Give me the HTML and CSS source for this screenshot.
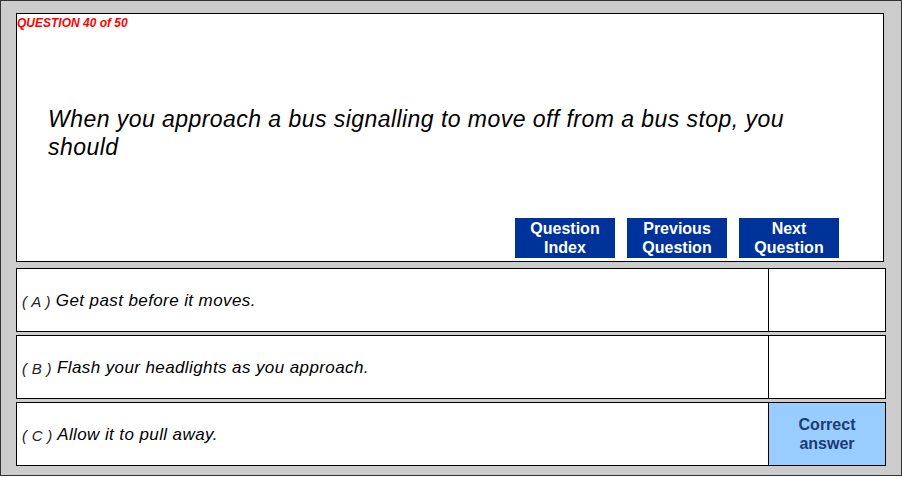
FILE: index.html
```html
<!DOCTYPE html>
<html lang="en">
<head>
  <meta charset="UTF-8" />
  <title>Question 40 of 50</title>
  <link rel="stylesheet" href="styles.css">
</head>
<body>
  <div class="frame">
    <div class="question-box">
      <div class="counter">QUESTION 40 of 50</div>
      <div class="question-text">When you approach a bus signalling to move off from a bus stop, you should</div>
      <div class="nav">
        <button class="nav-btn">Question<br>Index</button>
        <button class="nav-btn">Previous<br>Question</button>
        <button class="nav-btn">Next<br>Question</button>
      </div>
    </div>

    <div class="answers">
      <div class="answer">
        <div class="answer-text"><span class="letter">( A )</span> Get past before it moves.</div>
        <div class="answer-mark"></div>
      </div>
      <div class="answer">
        <div class="answer-text"><span class="letter">( B )</span> Flash your headlights as you approach.</div>
        <div class="answer-mark"></div>
      </div>
      <div class="answer">
        <div class="answer-text"><span class="letter">( C )</span> Allow it to pull away.</div>
        <div class="answer-mark correct">Correct<br>answer</div>
      </div>
    </div>
  </div>
</body>
</html>
```

FILE: styles.css
```css
* {
  box-sizing: border-box;
}
body {
  margin: 0;
  font-family: 'Liberation Sans', Arial, sans-serif;
  background: #fff;
}

.frame {
  width: 902px;
  height: 476px;
  background: #cccccc;
  border: 1px solid #333;
  padding: 12px 15px 0 15px;
}

.question-box {
  width: 868px;
  height: 249px;
  background: #fff;
  border: 1px solid #000;
  display: flex;
  flex-direction: column;
}

.counter {
  color: #ff0000;
  font-size: 12px;
  font-weight: bold;
  font-style: italic;
  padding: 2px 0 0 0;
  line-height: 14px;
}

.question-text {
  margin-top: 75px;
  padding: 0 60px 0 31px;
  font-size: 23px;
  font-style: italic;
  letter-spacing: 0.45px;
  line-height: 28px;
  color: #000;
}

.nav {
  margin-top: auto;
  display: flex;
  justify-content: flex-end;
  gap: 12px;
  padding: 0 44px 3px 0;
}

.nav-btn {
  width: 100px;
  height: 40px;
  border: none;
  padding: 0;
  background: #003399;
  color: #fff;
  font-family: 'Liberation Sans', Arial, sans-serif;
  font-size: 16px;
  font-weight: bold;
  line-height: 19px;
}

.answers {
  margin-top: 6px;
  display: flex;
  flex-direction: column;
  gap: 3px;
}

.answer {
  width: 870px;
  height: 64px;
  display: flex;
  background: #fff;
  border: 1px solid #000;
}

.answer-text {
  flex: 1;
  display: flex;
  align-items: center;
  padding: 2px 0 0 5px;
  font-size: 17px;
  font-style: italic;
  letter-spacing: 0.4px;
  color: #000;
  white-space: pre;
}

.letter {
  font-size: 15px;
  letter-spacing: 0.3px;
  color: #222;
}

.answer-mark {
  width: 117px;
  border-left: 1px solid #000;
}

.answer-mark.correct {
  background: #99ccff;
  color: #1a3d73;
  font-size: 16px;
  font-weight: bold;
  line-height: 19px;
  text-align: center;
  display: flex;
  align-items: center;
  justify-content: center;
}
```
